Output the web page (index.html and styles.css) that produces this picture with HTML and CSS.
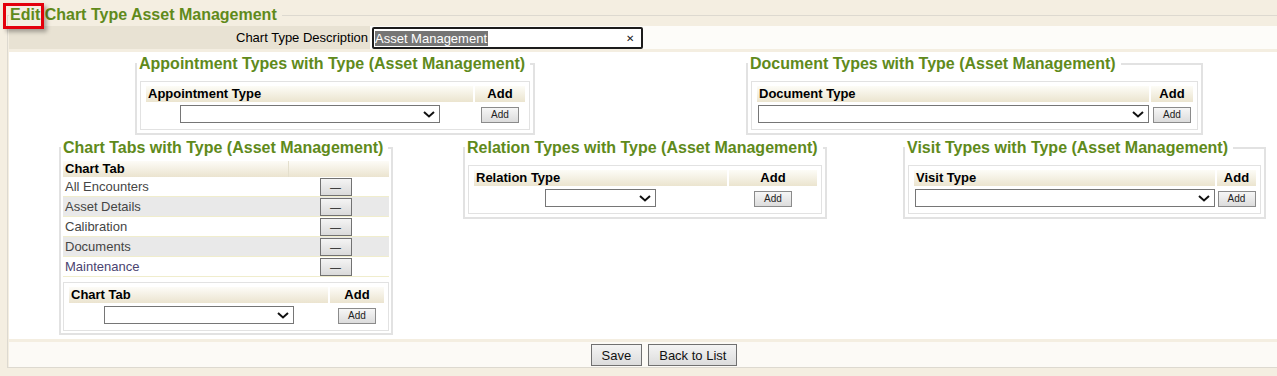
FILE: index.html
```html
<!DOCTYPE html>
<html lang="en">
<head>
    <meta charset="UTF-8">
    <title>Edit Chart Type</title>
    <link rel="stylesheet" href="styles.css">
</head>
<body>
<div class="page">
    <span class="callout"></span>
    <fieldset class="frame">
        <legend class="frame-title">Edit Chart Type Asset Management</legend>

        <div class="desc-row">
            <label class="desc-label" for="desc">Chart Type Description</label>
            <div class="desc-cell">
                <div class="desc-input" id="desc">
                    <span class="desc-selected">Asset Management</span>
                    <span class="desc-clear">&#x2715;</span>
                </div>
            </div>
        </div>

        <div class="sections">
            <div class="section-row row-top">
                <fieldset class="group group-appt">
                    <legend>Appointment Types with Type (Asset Management)</legend>
                    <div class="picker">
                        <div class="picker-head">Appointment Type</div>
                        <div class="picker-head picker-head-add">Add</div>
                        <div class="picker-cell">
                            <div class="select select-appt">
                                <svg class="chevron" viewBox="0 0 12 7"><path d="M1 1l5 4.5L11 1"/></svg>
                            </div>
                        </div>
                        <div class="picker-cell"><button class="btn-mini">Add</button></div>
                    </div>
                </fieldset>

                <fieldset class="group group-doc">
                    <legend>Document Types with Type (Asset Management)</legend>
                    <div class="picker">
                        <div class="picker-head">Document Type</div>
                        <div class="picker-head picker-head-add">Add</div>
                        <div class="picker-cell">
                            <div class="select select-full">
                                <svg class="chevron" viewBox="0 0 12 7"><path d="M1 1l5 4.5L11 1"/></svg>
                            </div>
                        </div>
                        <div class="picker-cell"><button class="btn-mini">Add</button></div>
                    </div>
                </fieldset>
            </div>

            <div class="section-row row-bottom">
                <fieldset class="group group-tabs">
                    <legend>Chart Tabs with Type (Asset Management)</legend>
                    <div class="tab-table">
                        <div class="tab-head">
                            <div class="tab-head-name">Chart Tab</div>
                            <div class="tab-head-act"></div>
                        </div>
                        <div class="tab-row">
                            <span class="tab-name">All Encounters</span>
                            <span class="tab-act"><button class="btn-remove">&#x2014;</button></span>
                        </div>
                        <div class="tab-row tab-row-alt">
                            <span class="tab-name">Asset Details</span>
                            <span class="tab-act"><button class="btn-remove">&#x2014;</button></span>
                        </div>
                        <div class="tab-row">
                            <span class="tab-name">Calibration</span>
                            <span class="tab-act"><button class="btn-remove">&#x2014;</button></span>
                        </div>
                        <div class="tab-row tab-row-alt">
                            <span class="tab-name">Documents</span>
                            <span class="tab-act"><button class="btn-remove">&#x2014;</button></span>
                        </div>
                        <div class="tab-row">
                            <span class="tab-name tab-name-visited">Maintenance</span>
                            <span class="tab-act"><button class="btn-remove">&#x2014;</button></span>
                        </div>
                    </div>
                    <div class="picker">
                        <div class="picker-head">Chart Tab</div>
                        <div class="picker-head picker-head-add">Add</div>
                        <div class="picker-cell">
                            <div class="select select-tab">
                                <svg class="chevron" viewBox="0 0 12 7"><path d="M1 1l5 4.5L11 1"/></svg>
                            </div>
                        </div>
                        <div class="picker-cell"><button class="btn-mini">Add</button></div>
                    </div>
                </fieldset>

                <fieldset class="group group-rel">
                    <legend>Relation Types with Type (Asset Management)</legend>
                    <div class="picker">
                        <div class="picker-head">Relation Type</div>
                        <div class="picker-head picker-head-add">Add</div>
                        <div class="picker-cell">
                            <div class="select select-rel">
                                <svg class="chevron" viewBox="0 0 12 7"><path d="M1 1l5 4.5L11 1"/></svg>
                            </div>
                        </div>
                        <div class="picker-cell"><button class="btn-mini">Add</button></div>
                    </div>
                </fieldset>

                <fieldset class="group group-visit">
                    <legend>Visit Types with Type (Asset Management)</legend>
                    <div class="picker">
                        <div class="picker-head">Visit Type</div>
                        <div class="picker-head picker-head-add">Add</div>
                        <div class="picker-cell">
                            <div class="select select-full">
                                <svg class="chevron" viewBox="0 0 12 7"><path d="M1 1l5 4.5L11 1"/></svg>
                            </div>
                        </div>
                        <div class="picker-cell"><button class="btn-mini">Add</button></div>
                    </div>
                </fieldset>
            </div>
        </div>

        <div class="actions">
            <button class="btn">Save</button>
            <button class="btn">Back to List</button>
        </div>
    </fieldset>
</div>
</body>
</html>
```

FILE: styles.css
```css
:root {
    --page-bg: #f4eee1;
    --title-green: #608a1b;
    --head-top: #fdfcf7;
    --head-bottom: #ebe4cf;
    --group-border: #e2e2e2;
}

body {
    margin: 0;
    background: var(--page-bg);
    font-family: "Liberation Sans", Arial, sans-serif;
    font-size: 13px;
    color: #000;
    overflow: hidden;
}

.page {
    position: relative;
    padding-top: 5px;
}

/* red annotation round the word "Edit" */
.callout {
    position: absolute;
    left: 3px;
    top: 3px;
    width: 35px;
    height: 20px;
    border: 3px solid #e3000b;
    box-shadow: 3px 3px 4px rgba(0,0,0,0.3);
    z-index: 2;
}

.frame {
    margin: 0 0 0 7px;
    width: 1310px;
    padding: 0 1px;
    border: 1px solid #ddd9d0;
    min-width: 0;
}

.frame-title {
    padding: 0 5px 0 1px;
    font-size: 16px;
    font-weight: bold;
    line-height: 20px;
    color: var(--title-green);
}

.desc-row {
    display: flex;
    height: 23px;
    margin-top: 1px;
}

.desc-label {
    width: 361px;
    background: #e8e2d3;
    text-align: right;
    padding-right: 2px;
    line-height: 23px;
    box-sizing: border-box;
}

.desc-cell {
    flex: 1;
    background: #fdfcf9;
    padding: 1px 0 0 2px;
}

.desc-input {
    width: 271px;
    height: 22px;
    box-sizing: border-box;
    border: 2px solid #1c1c1c;
    border-radius: 2px;
    background: #fff;
    display: flex;
    align-items: center;
    padding: 0 7px 0 1px;
}

.desc-selected {
    background: #757575;
    color: #fff;
    line-height: 15px;
    padding: 0 1px 0 0;
}

.desc-clear {
    margin-left: auto;
    font-size: 10px;
    color: #222;
}

.sections {
    margin-top: 3px;
    background: #fff;
    padding: 3px 0 4px;
}

.section-row {
    display: flex;
    align-items: flex-start;
}

.row-bottom {
    margin-top: 4px;
}

.group {
    margin: 0;
    padding: 8px 3px 3px;
    border: 2px solid var(--group-border);
    box-sizing: border-box;
    min-width: 0;
}

.group legend {
    margin-left: -3px;
    padding: 0 5px 0 2px;
    font-size: 16px;
    font-weight: bold;
    line-height: 18px;
    color: var(--title-green);
    white-space: nowrap;
}

.group-appt { width: 400px; margin-left: 126px; }
.group-doc { width: 457px; margin-left: 211px; }
.group-tabs { width: 334px; margin-left: 50px; padding: 4px 2px 2px; }
.group-rel { width: 364px; margin-left: 70px; }
.group-visit { width: 363px; margin-left: 76px; }

.group-tabs legend { margin-left: -2px; }

.picker {
    border: 1px solid var(--group-border);
    padding: 4px 4px 6px 5px;
    display: grid;
    grid-template-columns: 1fr 50px;
    column-gap: 2px;
    row-gap: 3px;
}

.group-doc .picker { grid-template-columns: 1fr 42px; }
.group-visit .picker { grid-template-columns: 1fr 39px; }
.group-rel .picker { grid-template-columns: 1fr 88px; }
.group-tabs .picker { grid-template-columns: 1fr 54px; margin-top: 5px; }

.picker-head {
    height: 16px;
    line-height: 16px;
    padding-left: 2px;
    font-weight: bold;
    background: linear-gradient(var(--head-top), var(--head-bottom));
}

.picker-head-add {
    padding-left: 0;
    text-align: center;
}

.picker-cell {
    display: flex;
    justify-content: center;
    align-items: flex-end;
}

.select {
    height: 18px;
    box-sizing: border-box;
    border: 1px solid #767676;
    background: #fff;
    display: flex;
    align-items: center;
    justify-content: flex-end;
    padding-right: 4px;
}

.select-appt { width: 260px; }
.select-rel { width: 111px; }
.select-tab { width: 190px; }
.select-full { width: 100%; margin-left: 1px; }

.chevron {
    width: 12px;
    height: 7px;
    fill: none;
    stroke: #111;
    stroke-width: 2;
}

.btn-mini {
    width: 38px;
    height: 16px;
    padding: 0;
    border: 1px solid #8b8b8b;
    background: linear-gradient(#f6f6f6, #dcdcdc);
    font-family: inherit;
    font-size: 10px;
    line-height: 14px;
    color: #222;
}

.tab-head {
    display: flex;
    height: 16px;
    line-height: 16px;
    font-weight: bold;
    background: linear-gradient(var(--head-top), var(--head-bottom));
}

.tab-head-name {
    flex: 1;
    padding-left: 2px;
    border-right: 1px solid #e4dfcd;
}

.tab-head-act {
    width: 100px;
}

.tab-row {
    display: flex;
    align-items: center;
    height: 19px;
    border-bottom: 1px solid #f0edcd;
}

.tab-row-alt {
    background: #e9e9e9;
}

.tab-name {
    flex: 1;
    padding-left: 2px;
    color: #454545;
}

.tab-name-visited {
    color: #4a4470;
}

.tab-act {
    width: 101px;
    display: flex;
    justify-content: center;
    padding-right: 6px;
    box-sizing: border-box;
}

.btn-remove {
    width: 32px;
    height: 18px;
    padding: 0;
    border: 1px solid #727272;
    background: linear-gradient(#f4f4f4, #dadada);
    font-family: inherit;
    font-size: 11px;
    line-height: 14px;
    color: #111;
}

.actions {
    margin-top: 3px;
    background: #fcfaf6;
    display: flex;
    justify-content: center;
    gap: 6px;
    padding: 2px 0 1px;
}

.btn {
    height: 22px;
    padding: 0 10px;
    border: 1px solid #707070;
    background: linear-gradient(#f4f4f4, #dcdcdc);
    font-family: inherit;
    font-size: 13px;
    color: #111;
}
```
